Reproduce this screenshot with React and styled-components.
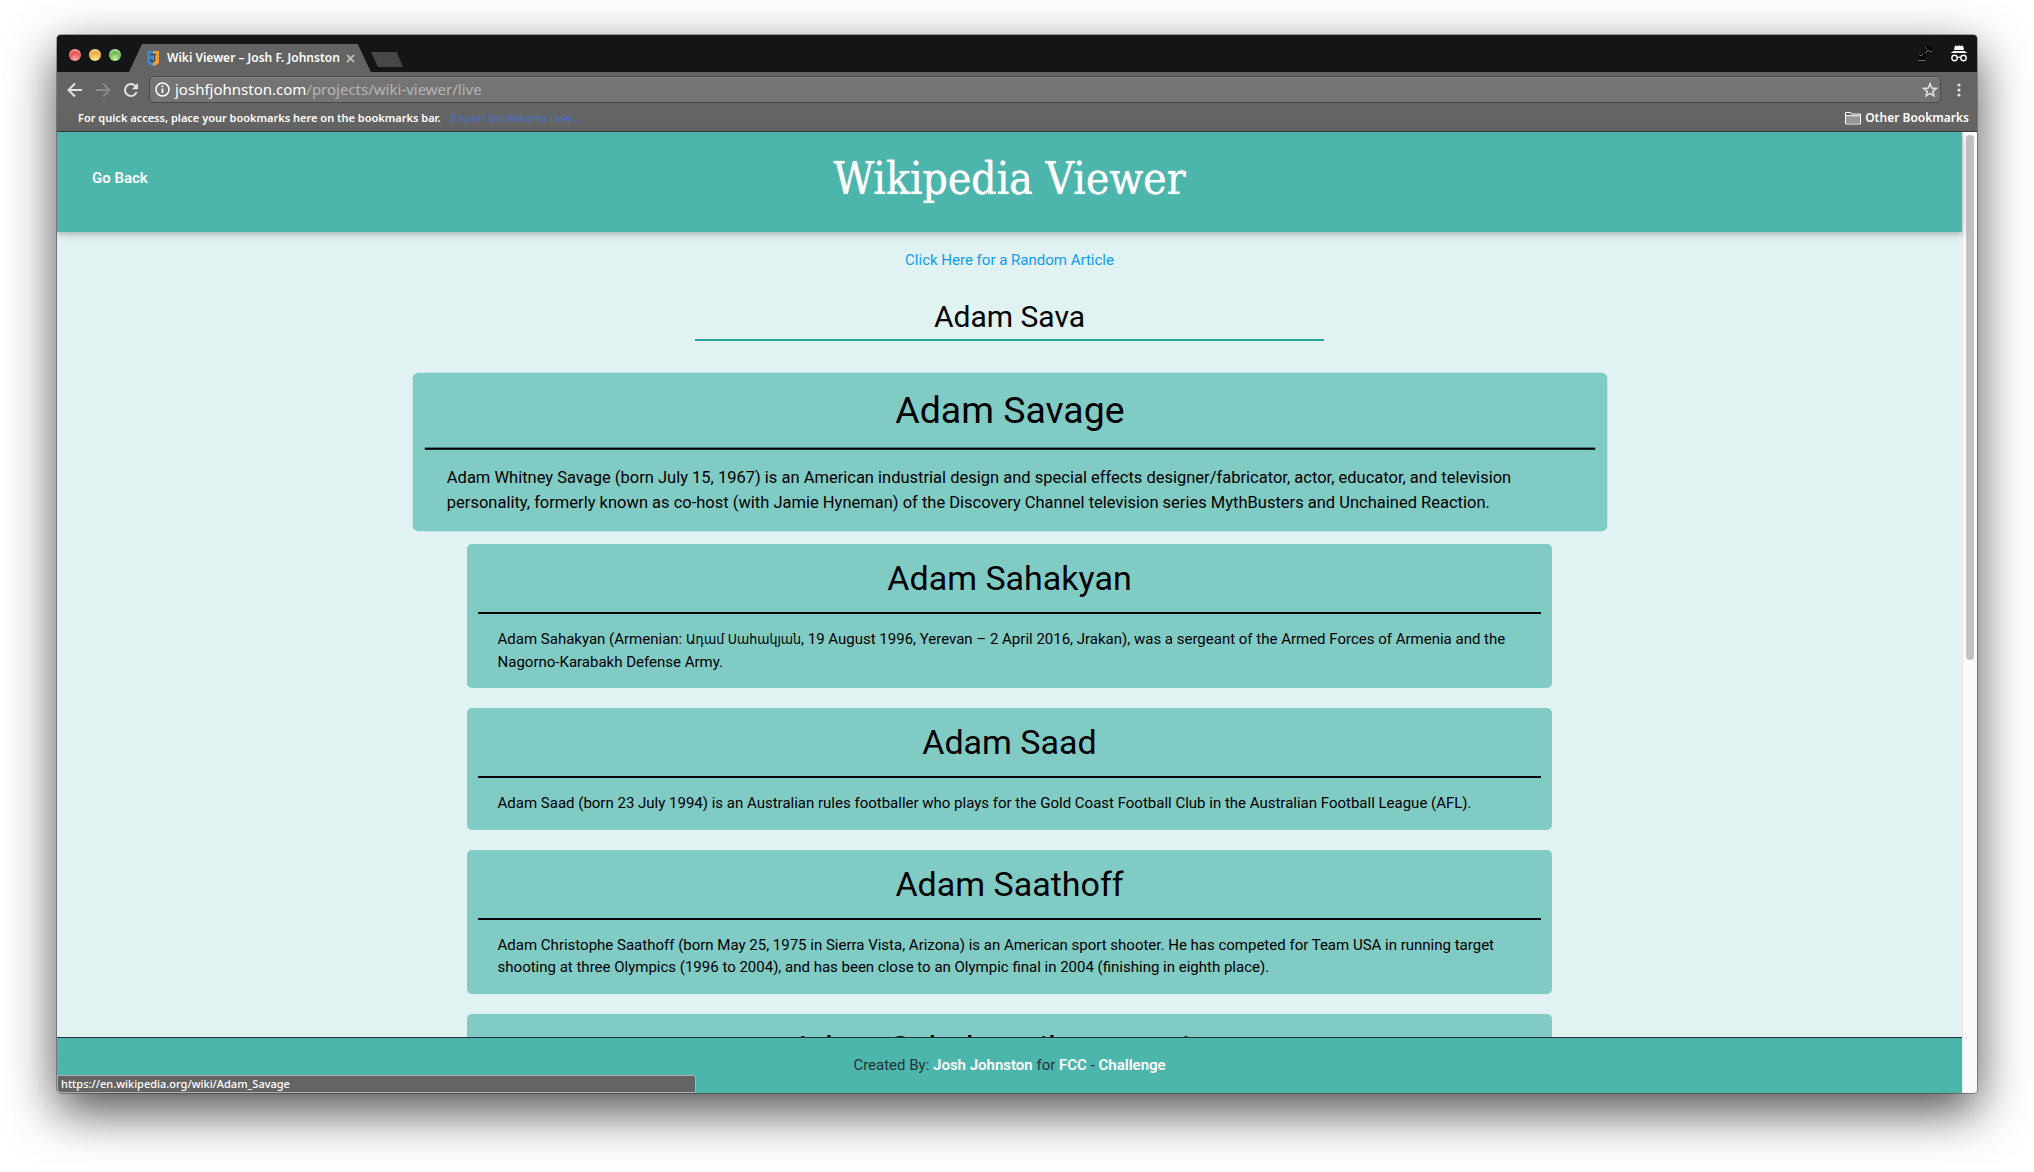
import React, { useState } from "react";
import styled, { createGlobalStyle } from "styled-components";

const GlobalStyle = createGlobalStyle`
  *, *::before, *::after { box-sizing: border-box; }
  body {
    margin: 0;
    background: #fff;
    font-family: Roboto, "DejaVu Sans Condensed", "DejaVu Sans", sans-serif;
    font-size: 15px;
    line-height: 1.5;
    color: #000;
  }
  a { text-decoration: none; }
  button { border: 0; padding: 0; background: none; color: inherit; font: inherit; }
`;

const Desktop = styled.div`
  display: flex;
  height: 100vh;
  min-height: 500px;
  padding: 35px 57px 79px;
  overflow: hidden;
`;

const BrowserWindow = styled.div`
  position: relative;
  flex: 1;
  min-width: 0;
  display: flex;
  flex-direction: column;
  overflow: hidden;
  border-radius: 4px;
`;

const WindowShadow = styled.div`
  flex: 1;
  min-width: 0;
  display: flex;
  border-radius: 4px;
  box-shadow: 0 0 0 1px rgba(0, 0, 0, 0.3), 0 18px 50px rgba(0, 0, 0, 0.7);
`;

/* Browser chrome */

const Chrome = styled.header`
  font-family: "Noto Sans", "Open Sans", sans-serif;
  color: #fff;
  background: #646464;
  border-bottom: 1px solid #3c3c3c;
`;

const TabStrip = styled.div`
  display: flex;
  align-items: flex-end;
  height: 37px;
  padding: 0 9px 0 12px;
  background: #141517;
`;

const TrafficLights = styled.div`
  display: flex;
  gap: 8px;
  margin-right: 8px;
  padding-bottom: 11px;
`;

const Light = styled.button`
  width: 12px;
  height: 12px;
  border-radius: 50%;
  background: radial-gradient(circle at 50% 85%, ${(p) => p.$glow} 0, ${(p) => p.$color} 60%);
  box-shadow: inset 0 2px 2px rgba(255, 255, 255, 0.5);
`;

const Tab = styled.div`
  display: flex;
  align-items: center;
  height: 28px;
  padding: 0 16px 0 18px;
  background: #646464;
  clip-path: polygon(13px 0, calc(100% - 13px) 0, 100% 100%, 0 100%);
  font-size: 12px;
  font-weight: 600;
  line-height: 16px;
  white-space: nowrap;
`;

const TabTitle = styled.span`
  margin: 0 6px 0 8px;
`;

const TabClose = styled.button`
  display: flex;
  color: #c9c9c9;
`;

const NewTab = styled.button`
  width: 32px;
  height: 15px;
  margin-bottom: 5px;
  background: #474747;
  clip-path: polygon(0 0, 26px 0, 100% 100%, 7px 100%);
`;

const WindowTools = styled.div`
  display: flex;
  align-items: center;
  gap: 18px;
  margin-left: auto;
  padding-bottom: 10px;
`;

const Toolbar = styled.div`
  display: flex;
  align-items: center;
  gap: 8px;
  height: 35px;
  padding: 0 8px;
`;

const IconButton = styled.button`
  display: flex;
  align-items: center;
  justify-content: center;
  width: 20px;
  height: 20px;
  color: ${(p) => (p.$dim ? "#8a8a8a" : "#e2e2e2")};
`;

const AddressBar = styled.form`
  flex: 1;
  min-width: 0;
  display: flex;
  align-items: center;
  height: 27px;
  padding: 0 0 0 5px;
  border: 1px solid #4b4b4b;
  border-radius: 4px;
  background: #747474;
  box-shadow: inset 0 1px 0 #838383;
  font-size: 15px;
`;

const Host = styled.label`
  margin-left: 5px;
`;

const PathInput = styled.input`
  flex: 1;
  min-width: 0;
  padding: 0;
  border: 0;
  outline: 0;
  background: none;
  color: #b4b4b4;
  font: inherit;
`;

const BookmarksBar = styled.div`
  display: flex;
  align-items: center;
  gap: 10px;
  height: 24px;
  padding: 0 8px 3px 21px;
  font-size: 11px;
  font-weight: 600;
  line-height: 16px;
`;

const ImportLink = styled.a`
  color: #4a72c8;
  font-weight: 400;
`;

const OtherBookmarks = styled.button`
  display: flex;
  align-items: center;
  gap: 4px;
  margin-left: auto;
  font-size: 12px;
  font-weight: 600;
`;

/* Web page */

const Viewport = styled.div`
  flex: 1;
  min-height: 0;
  display: flex;
`;

const Page = styled.div`
  flex: 1;
  min-width: 0;
  display: flex;
  flex-direction: column;
  background: #e0f2f1;
`;

const Banner = styled.div`
  position: relative;
  display: grid;
  grid-template-columns: 1fr auto 1fr;
  align-items: center;
  flex: none;
  height: 100px;
  padding: 0 35px 7px;
  background: #4db6ac;
  color: #fff;
  box-shadow: 0 2px 5px rgba(0, 0, 0, 0.16), 0 2px 10px rgba(0, 0, 0, 0.12);
`;

const StrongLink = styled.a`
  justify-self: start;
  color: #fff;
  font-weight: 600;
`;

const SiteTitle = styled.h1`
  margin: 0;
  font-family: "DejaVu Serif Condensed", "DejaVu Serif", serif;
  font-size: 44px;
  font-weight: 400;
  line-height: 50px;
  text-shadow: 0 0 1px #fff;
`;

const Main = styled.main`
  flex: 1;
  min-height: 0;
  display: flex;
  flex-direction: column;
  align-items: center;
  padding-top: 17px;
  overflow: hidden;
`;

const RandomLink = styled.a`
  color: #119cf3;
  line-height: 22px;
`;

const SearchForm = styled.form`
  flex: none;
  display: flex;
  width: 33%;
  margin: 23px 0 39px;
`;

const SearchInput = styled.input`
  width: 100%;
  height: 47px;
  padding: 0;
  border: 0;
  border-bottom: 2px solid #26a69a;
  outline: 0;
  background: none;
  color: #000;
  font: inherit;
  font-size: 30px;
  text-align: center;
`;

const Results = styled.div`
  flex: none;
  display: flex;
  flex-direction: column;
  gap: 20px;
  width: 57%;
`;

const Card = styled.a`
  display: block;
  padding: 16px 11px 15px;
  border-radius: 5px;
  background: #80cbc4;
  color: #000;
  transform: ${(p) => (p.$active ? "scale(1.1)" : "none")};
`;

const CardTitle = styled.h2`
  margin: 0;
  padding-bottom: 16px;
  border-bottom: 2px solid #000;
  font-size: 34px;
  font-weight: 400;
  line-height: 36px;
  text-align: center;
`;

const CardText = styled.p`
  margin: 0;
  padding: 14px 20px 0;
`;

const Armenian = styled.span`
  font-size: 14px;
`;

const Footer = styled.footer`
  flex: none;
  height: 56px;
  display: flex;
  align-items: center;
  justify-content: center;
  border-top: 1px solid #263238;
  background: #4db6ac;
  color: #263238;
`;

const Credits = styled.p`
  margin: 0;
`;

const ScrollTrack = styled.div`
  flex: none;
  width: 15px;
  padding: 3px;
  border-left: 1px solid #e7e7e7;
  background: #fafafa;
`;

const ScrollThumb = styled.div`
  width: 8px;
  height: 55%;
  border-radius: 4px;
  background: #c2c2c2;
`;

const StatusBubble = styled.div`
  position: absolute;
  left: 0;
  bottom: 0;
  width: 33.3%;
  height: 18px;
  padding: 0 3px;
  border: 1px solid #b0b0b0;
  border-radius: 0 3px 0 4px;
  background: #646464;
  color: #fff;
  font-family: "Noto Sans", "Open Sans", sans-serif;
  font-size: 11px;
  font-weight: 500;
  line-height: 16px;
`;

/* Drawings */

const Favicon = () => (
  <svg width="12" height="16" viewBox="0 0 12 16" aria-hidden="true">
    <path d="M0 1H6V16Q0 14.500 0 12Z" fill="#3f87c6" />
    <path d="M12 1H6V16Q12 14.500 12 12Z" fill="#f59a2c" />
    <path d="M3 4.500H9M7.500 4V9Q7.500 11.500 5.500 11.500Q3.500 11.500 3.500 9" fill="none" stroke="#3d4650" strokeWidth="1.500" />
  </svg>
);

const CloseIcon = () => (
  <svg width="9" height="9" viewBox="0 0 9 9" fill="none" stroke="currentColor" strokeWidth="1.6">
    <path d="M1 1l7 7M8 1l-7 7" />
  </svg>
);

const ArrowIcon = ({ forward }) => (
  <svg width="16" height="16" viewBox="0 0 16 16" fill="none" stroke="currentColor" strokeWidth="2">
    <path d={forward ? "M1 8h12.500M8 1.500l6.500 6.500-6.500 6.500" : "M15 8H2.500M8 1.500L1.500 8 8 14.500"} />
  </svg>
);

const ReloadIcon = () => (
  <svg width="16" height="16" viewBox="0 0 16 16" fill="none">
    <path d="M13.600 10A6 6 0 1 1 12.300 3.800" stroke="currentColor" strokeWidth="2" />
    <path d="M15 1v6.200H8.800z" fill="currentColor" />
  </svg>
);

const InfoIcon = () => (
  <svg width="15" height="15" viewBox="0 0 15 15" fill="none" aria-hidden="true">
    <circle cx="7.500" cy="7.500" r="6.500" stroke="#fff" strokeWidth="1.500" />
    <path d="M7.500 6.500v4.500M7.500 3.600v1.700" stroke="#fff" strokeWidth="1.700" />
  </svg>
);

const StarIcon = () => (
  <svg width="16" height="16" viewBox="0 0 16 16" fill="none" stroke="currentColor" strokeWidth="1.500">
    <path d="M8 1.800l1.700 4.300 4.500.3-3.500 2.900 1.200 4.500L8 11.300l-3.900 2.500 1.200-4.500L1.800 6.400l4.500-.3z" />
  </svg>
);

const DotsIcon = () => (
  <svg width="4" height="14" viewBox="0 0 4 14" fill="currentColor">
    <circle cx="2" cy="2" r="1.600" />
    <circle cx="2" cy="7" r="1.600" />
    <circle cx="2" cy="12" r="1.600" />
  </svg>
);

const FolderIcon = () => (
  <svg width="16" height="14" viewBox="0 0 16 14" aria-hidden="true">
    <path d="M.5 13V1.500h5l1 1.500h9V13z" fill="none" stroke="#fff" />
    <path d="M1 5h14v7.500H1z" fill="#979797" />
    <path d="M1 4.700h14" stroke="#fff" />
  </svg>
);

const ExpandIcon = () => (
  <svg width="14" height="16" viewBox="0 0 14 16" aria-hidden="true">
    <path d="M7 0h7v8H7zM0 8h7v6H0z" fill="#08090a" />
    <path d="M0 14.500h7M7 7l2-1 1-2 2 2 2-1M7 1l2 2M1 8l2 2 2-2" fill="none" stroke="#777" strokeWidth=".9" />
  </svg>
);

const IncognitoIcon = () => (
  <svg width="18" height="17" viewBox="0 0 18 17" aria-hidden="true">
    <path d="M5 .5q2 .8 4 0 2 .8 4 0l1 4.500H4zM3.500 6h11l3 2H.5z" fill="#fff" />
    <circle cx="4.500" cy="13" r="2.700" fill="none" stroke="#fff" strokeWidth="1.400" />
    <circle cx="13.500" cy="13" r="2.700" fill="none" stroke="#fff" strokeWidth="1.400" />
    <path d="M7 12.800q2-1.200 4 0" fill="none" stroke="#fff" strokeWidth="1.200" />
  </svg>
);

const articles = [
  {
    title: "Adam Savage",
    active: true,
    text: "Adam Whitney Savage (born July 15, 1967) is an American industrial design and special effects designer/fabricator, actor, educator, and television personality, formerly known as co-host (with Jamie Hyneman) of the Discovery Channel television series MythBusters and Unchained Reaction.",
  },
  {
    title: "Adam Sahakyan",
    text: (
      <>
        Adam Sahakyan (Armenian: <Armenian lang="hy">Ադամ Սահակյան</Armenian>, 19 August 1996, Yerevan – 2 April
        2016, Jrakan), was a sergeant of the Armed Forces of Armenia and the Nagorno-Karabakh Defense Army.
      </>
    ),
  },
  {
    title: "Adam Saad",
    text: "Adam Saad (born 23 July 1994) is an Australian rules footballer who plays for the Gold Coast Football Club in the Australian Football League (AFL).",
  },
  {
    title: "Adam Saathoff",
    text: "Adam Christophe Saathoff (born May 25, 1975 in Sierra Vista, Arizona) is an American sport shooter. He has competed for Team USA in running target shooting at three Olympics (1996 to 2004), and has been close to an Olympic final in 2004 (finishing in eighth place).",
  },
  { title: "Adam Sahakonailovanessian", text: "" },
];

const stop = (e) => e.preventDefault();

export default function App() {
  const [query, setQuery] = useState("Adam Sava");
  const [path, setPath] = useState("/projects/wiki-viewer/live");

  return (
    <Desktop>
      <GlobalStyle />
      <WindowShadow>
        <BrowserWindow>
          <Chrome>
            <TabStrip>
              <TrafficLights>
                <Light aria-label="Close window" $color="#e8403f" $glow="#ffb0a8" />
                <Light aria-label="Minimise window" $color="#ee9f2e" $glow="#fff09a" />
                <Light aria-label="Zoom window" $color="#62b045" $glow="#cdf5a0" />
              </TrafficLights>
              <Tab>
                <Favicon />
                <TabTitle>Wiki Viewer – Josh F. Johnston</TabTitle>
                <TabClose aria-label="Close tab"><CloseIcon /></TabClose>
              </Tab>
              <NewTab aria-label="New tab" />
              <WindowTools>
                <ExpandIcon />
                <IncognitoIcon />
              </WindowTools>
            </TabStrip>
            <Toolbar>
              <IconButton aria-label="Back"><ArrowIcon /></IconButton>
              <IconButton aria-label="Forward" $dim><ArrowIcon forward /></IconButton>
              <IconButton aria-label="Reload"><ReloadIcon /></IconButton>
              <AddressBar onSubmit={stop}>
                <InfoIcon />
                <Host htmlFor="address">joshfjohnston.com</Host>
                <PathInput id="address" value={path} onChange={(e) => setPath(e.target.value)} />
                <IconButton type="button" aria-label="Bookmark this page"><StarIcon /></IconButton>
              </AddressBar>
              <IconButton aria-label="Menu"><DotsIcon /></IconButton>
            </Toolbar>
            <BookmarksBar>
              <span>For quick access, place your bookmarks here on the bookmarks bar.</span>
              <ImportLink href="#import">Import bookmarks now...</ImportLink>
              <OtherBookmarks><FolderIcon />Other Bookmarks</OtherBookmarks>
            </BookmarksBar>
          </Chrome>
          <Viewport>
            <Page>
              <Banner>
                <StrongLink href="#back">Go Back</StrongLink>
                <SiteTitle>Wikipedia Viewer</SiteTitle>
              </Banner>
              <Main>
                <RandomLink href="#random">Click Here for a Random Article</RandomLink>
                <SearchForm onSubmit={stop}>
                  <SearchInput aria-label="Search Wikipedia" value={query} onChange={(e) => setQuery(e.target.value)} />
                </SearchForm>
                <Results>
                  {articles.map((a) => (
                    <Card key={a.title} href="#article" $active={a.active}>
                      <CardTitle>{a.title}</CardTitle>
                      <CardText>{a.text}</CardText>
                    </Card>
                  ))}
                </Results>
              </Main>
              <Footer>
                <Credits>
                  Created By: <StrongLink href="#josh">Josh Johnston</StrongLink> for{" "}
                  <StrongLink href="#fcc">FCC</StrongLink> - <StrongLink href="#challenge">Challenge</StrongLink>
                </Credits>
              </Footer>
            </Page>
            <ScrollTrack><ScrollThumb /></ScrollTrack>
          </Viewport>
          <StatusBubble>https://en.wikipedia.org/wiki/Adam_Savage</StatusBubble>
        </BrowserWindow>
      </WindowShadow>
    </Desktop>
  );
}
